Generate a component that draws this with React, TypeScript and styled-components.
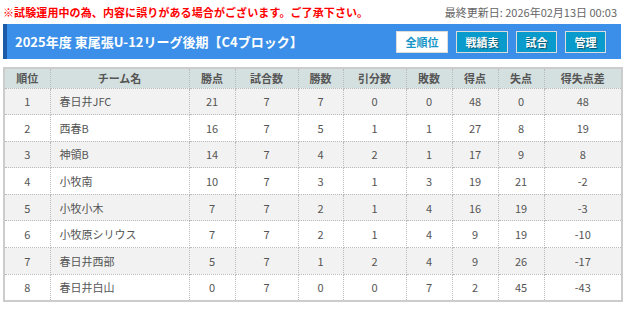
import React from "react";
import styled, { createGlobalStyle } from "styled-components";

const Global = createGlobalStyle`
  html, body { margin: 0; padding: 0; background: #fff; }
  body { font-family: "Noto Sans CJK JP", "Noto Sans", sans-serif; }
`;

const Page = styled.div`
  width: 633px;
  padding: 0 12px 0 3px;
  box-sizing: border-box;
`;

const TopLine = styled.div`
  display: flex;
  justify-content: space-between;
  align-items: center;
  height: 24px;
  font-size: 11px;
  line-height: 14px;
`;

const Notice = styled.span`
  color: #f00;
  font-weight: bold;
  letter-spacing: 0.1px;
`;

const Updated = styled.span`
  color: #666;
  padding-right: 4px;
`;

const TitleBar = styled.div`
  display: flex;
  align-items: center;
  justify-content: space-between;
  height: 35px;
  background: #3b8fe8;
  border-left: 4px solid #1a5aa6;
  padding: 0 15px 0 8px;
`;

const Title = styled.h1`
  margin: 0;
  color: #fff;
  font-size: 13px;
  line-height: 16px;
  font-weight: bold;
`;

const Buttons = styled.div`
  display: flex;
  gap: 8px;
`;

const Btn = styled.a<{ $active?: boolean }>`
  display: flex;
  align-items: center;
  justify-content: center;
  height: 22px;
  box-sizing: border-box;
  padding: 0 8.5px;
  font-size: 11px;
  line-height: 14px;
  font-weight: bold;
  border: 1px solid #dcdcdc;
  background: ${(p) => (p.$active ? "#fff" : "#0a9bcd")};
  color: ${(p) => (p.$active ? "#1596c8" : "#fff")};
  text-shadow: ${(p) => (p.$active ? "none" : "1px 1px 1px rgba(0,0,0,0.5)")};
`;

const Table = styled.table`
  margin-top: 8px;
  width: 618px;
  border-collapse: collapse;
  table-layout: fixed;
  border: 2px solid #ccc;
  font-size: 11px;
  line-height: 14px;
  color: #555;
`;

const Th = styled.th`
  background: #d4dfdf;
  height: 20px;
  padding: 0;
  font-weight: bold;
  border: 1px dotted #bbb;
  border-top: none;
  box-sizing: border-box;
`;

const Tr = styled.tr<{ $odd: boolean }>`
  background: ${(p) => (p.$odd ? "#f2f2f2" : "#fff")};
`;

const Td = styled.td<{ $left?: boolean }>`
  height: 26.6px;
  box-sizing: border-box;
  padding: 0 ${(p) => (p.$left ? "9px" : "0")};
  text-align: ${(p) => (p.$left ? "left" : "center")};
  border: 1px dotted #bbb;
`;

const widths = [46, 139, 46, 63, 45, 63, 46, 46, 46, 78];
const heads = ["順位", "チーム名", "勝点", "試合数", "勝数", "引分数", "敗数", "得点", "失点", "得失点差"];

const rows: (string | number)[][] = [
  [1, "春日井JFC", 21, 7, 7, 0, 0, 48, 0, 48],
  [2, "西春B", 16, 7, 5, 1, 1, 27, 8, 19],
  [3, "神領B", 14, 7, 4, 2, 1, 17, 9, 8],
  [4, "小牧南", 10, 7, 3, 1, 3, 19, 21, -2],
  [5, "小牧小木", 7, 7, 2, 1, 4, 16, 19, -3],
  [6, "小牧原シリウス", 7, 7, 2, 1, 4, 9, 19, -10],
  [7, "春日井西部", 5, 7, 1, 2, 4, 9, 26, -17],
  [8, "春日井白山", 0, 7, 0, 0, 7, 2, 45, -43],
];

export default function App() {
  return (
    <Page>
      <Global />
      <TopLine>
        <Notice>※試験運用中の為、内容に誤りがある場合がございます。ご了承下さい。</Notice>
        <Updated>最終更新日: 2026年02月13日 00:03</Updated>
      </TopLine>
      <TitleBar>
        <Title>2025年度 東尾張U-12リーグ後期【C4ブロック】</Title>
        <Buttons>
          <Btn $active>全順位</Btn>
          <Btn>戦績表</Btn>
          <Btn>試合</Btn>
          <Btn>管理</Btn>
        </Buttons>
      </TitleBar>
      <Table>
        <colgroup>
          {widths.map((w, i) => (
            <col key={i} style={{ width: w }} />
          ))}
        </colgroup>
        <thead>
          <tr>
            {heads.map((h) => (
              <Th key={h}>{h}</Th>
            ))}
          </tr>
        </thead>
        <tbody>
          {rows.map((r, i) => (
            <Tr key={i} $odd={i % 2 === 0}>
              {r.map((c, j) => (
                <Td key={j} $left={j === 1}>
                  {c}
                </Td>
              ))}
            </Tr>
          ))}
        </tbody>
      </Table>
    </Page>
  );
}
